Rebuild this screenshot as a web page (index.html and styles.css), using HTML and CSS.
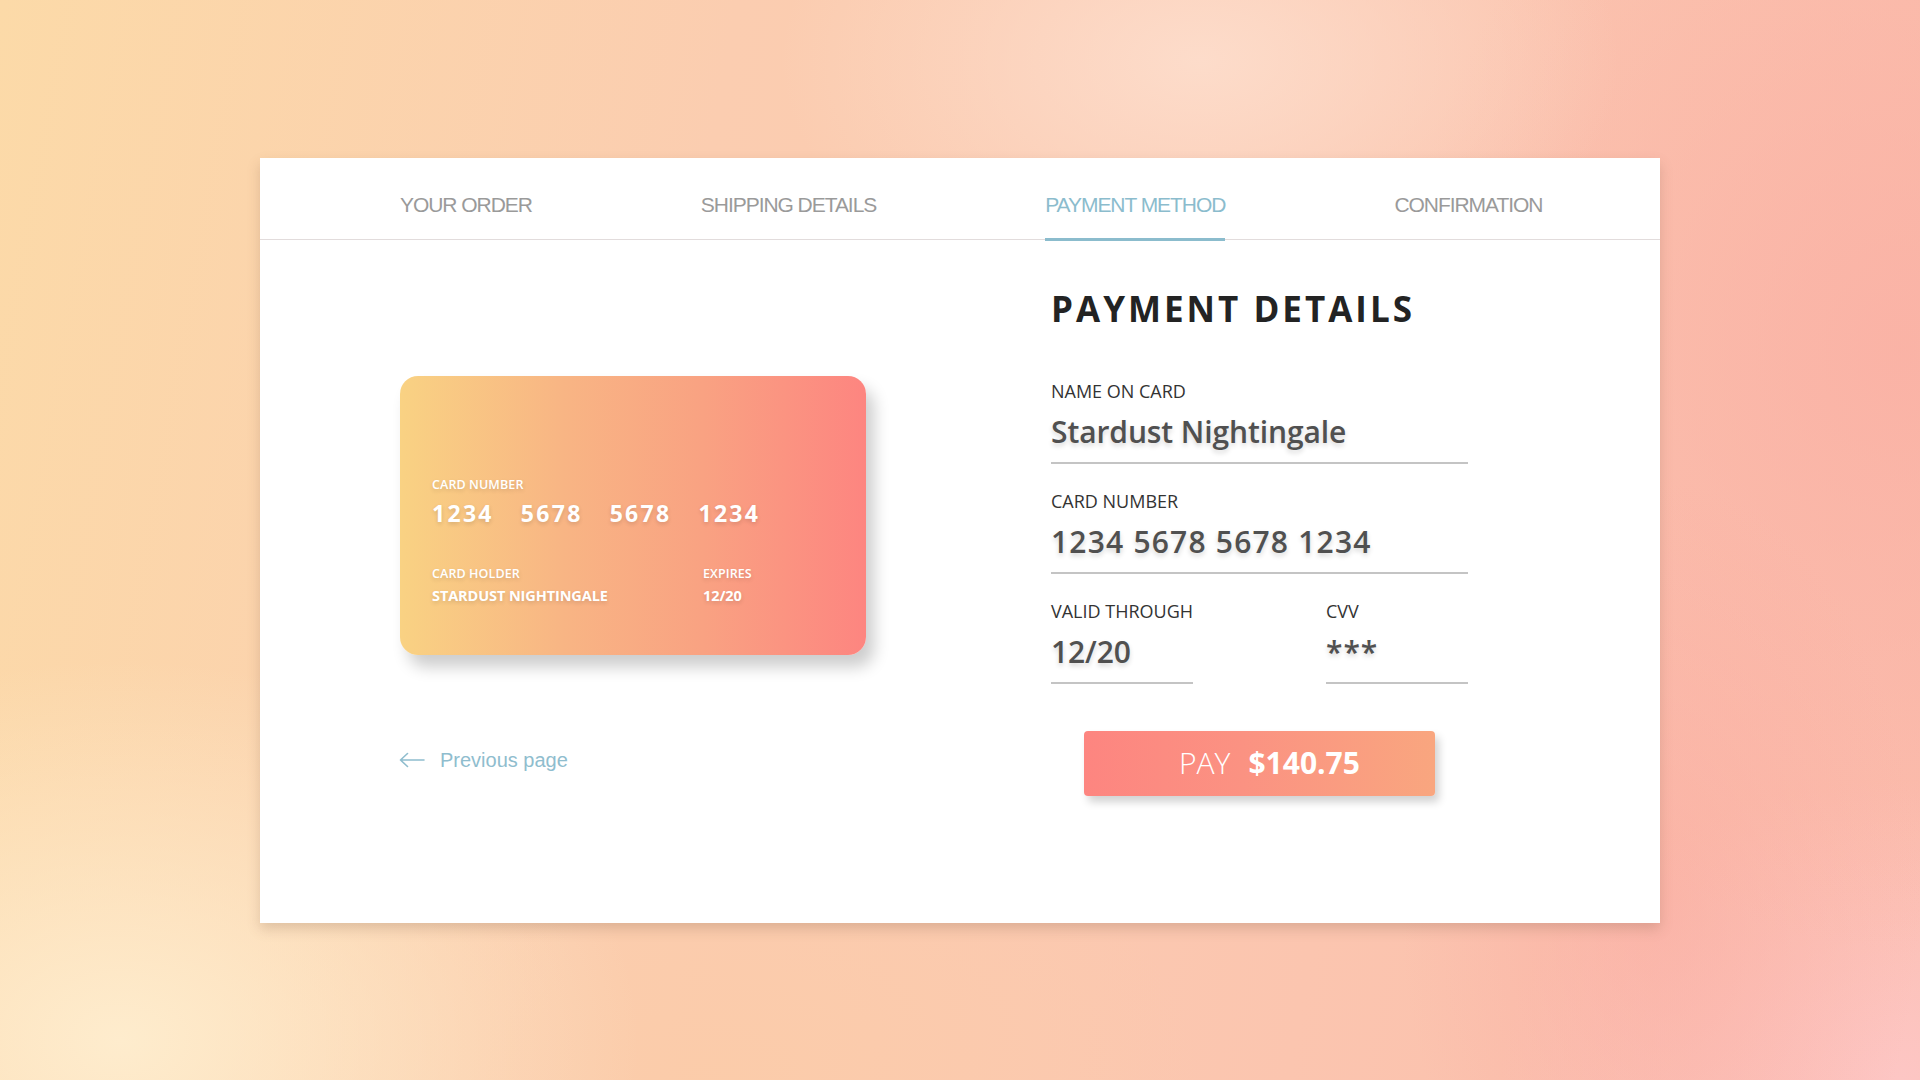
FILE: index.html
```html
<!DOCTYPE html>
<html lang="en">
<head>
<meta charset="utf-8">
<title>Checkout - Payment</title>
<link rel="stylesheet" href="styles.css">
</head>
<body>
<div class="bg">
  <main class="panel">
    <nav class="tabs">
      <div class="tab">YOUR ORDER</div>
      <div class="tab">SHIPPING DETAILS</div>
      <div class="tab active">PAYMENT METHOD</div>
      <div class="tab">CONFIRMATION</div>
    </nav>
    <section class="content">
      <div class="left">
        <div class="card">
          <div class="card-label">CARD NUMBER</div>
          <div class="card-number"><span>1234</span><span>5678</span><span>5678</span><span>1234</span></div>
          <div class="card-bottom">
            <div class="holder">
              <div class="card-label">CARD HOLDER</div>
              <div class="card-value">STARDUST NIGHTINGALE</div>
            </div>
            <div class="expires">
              <div class="card-label">EXPIRES</div>
              <div class="card-value">12/20</div>
            </div>
          </div>
        </div>
        <a class="prev" href="#">
          <svg class="arrow" width="26" height="16" viewBox="0 0 26 16"><path d="M25 8H1.5M8.5 1.5L1.5 8l7 6.5" fill="none" stroke="#8fbdce" stroke-width="1.6" stroke-linecap="round" stroke-linejoin="round"/></svg>
          <span>Previous page</span>
        </a>
      </div>
      <div class="right">
        <h1 class="title">PAYMENT DETAILS</h1>
        <div class="field">
          <div class="label">NAME ON CARD</div>
          <div class="value">Stardust Nightingale</div>
        </div>
        <div class="field">
          <div class="label">CARD NUMBER</div>
          <div class="value digits">1234 5678 5678 1234</div>
        </div>
        <div class="row">
          <div class="field small">
            <div class="label">VALID THROUGH</div>
            <div class="value">12/20</div>
          </div>
          <div class="field small">
            <div class="label">CVV</div>
            <div class="value stars">***</div>
          </div>
        </div>
        <button class="pay"><span class="pay-word">PAY</span><span class="pay-amount">$140.75</span></button>
      </div>
    </section>
  </main>
</div>
</body>
</html>
```
FILE: styles.css
```css
* { box-sizing: border-box; }
html, body { margin: 0; padding: 0; }
body {
  width: 1920px;
  height: 1080px;
  overflow: hidden;
  font-family: "Open Sans", "Liberation Sans", sans-serif;
}
.bg {
  width: 1920px;
  height: 1080px;
  padding-top: 158px;
  display: flex;
  justify-content: center;
  align-items: flex-start;
  background:
    radial-gradient(ellipse 260px 420px at 1660px 900px, rgba(250,170,160,0.55), rgba(250,170,160,0) 100%),
    radial-gradient(ellipse 420px 260px at 1200px 60px, rgba(253,222,205,0.9), rgba(253,222,205,0) 100%),
    radial-gradient(ellipse 520px 380px at 120px 1040px, rgba(254,236,205,1), rgba(254,236,205,0) 100%),
    radial-gradient(ellipse 500px 300px at 700px 1080px, rgba(251,204,168,0.8), rgba(251,204,168,0) 100%),
    radial-gradient(ellipse 500px 600px at 1900px 350px, rgba(250,176,164,0.8), rgba(250,176,164,0) 100%),
    radial-gradient(ellipse 400px 300px at 1900px 1080px, rgba(253,198,196,1), rgba(253,198,196,0) 100%),
    linear-gradient(100deg, #fcdaa8 0%, #fbcdb0 35%, #fbc8b0 60%, #fbbcac 100%);
}
.panel {
  width: 1400px;
  height: 765px;
  background: #fff;
  box-shadow: 0 6px 12px rgba(120, 80, 60, 0.22);
  display: flex;
  flex-direction: column;
}
.tabs {
  height: 82px;
  border-bottom: 1px solid #e2dcdc;
  display: flex;
  gap: 169px;
  padding-left: 140px;
}
.tab {
  font-family: "Liberation Sans", Arial, sans-serif;
  font-size: 21px;
  letter-spacing: -1.05px;
  color: #9a9a9a;
  padding-top: 35px;
  line-height: 24px;
  height: 82px;
  white-space: nowrap;
}
.tab.active {
  color: #8bbccd;
  border-bottom: 3px solid #8bbccd;
  height: 83px;
}
.content {
  flex: 1;
  display: grid;
  grid-template-columns: 791px 1fr;
}
.left {
  padding-left: 140px;
  padding-top: 136px;
  display: flex;
  flex-direction: column;
  align-items: flex-start;
}
.card {
  width: 466px;
  height: 279px;
  border-radius: 18px;
  background: linear-gradient(90deg, #f9d283 0%, #f8b584 35%, #f9a282 65%, #fd8580 100%);
  box-shadow: 8px 12px 16px rgba(0, 0, 0, 0.2);
  padding: 101px 0 0 32px;
  color: #fff;
  text-shadow: 0 2px 4px rgba(0, 0, 0, 0.14);
}
.card-label {
  font-size: 12.5px;
  font-weight: 600;
  line-height: 16px;
  letter-spacing: 0.1px;
}
.card-number {
  display: flex;
  gap: 27px;
  font-size: 23px;
  font-weight: 700;
  line-height: 30px;
  letter-spacing: 2.3px;
  margin-top: 5px;
}
.card-bottom {
  display: flex;
  margin-top: 38px;
}
.holder { width: 271px; }
.card-value {
  font-size: 14.5px;
  font-weight: 700;
  line-height: 20px;
  margin-top: 4px;
  letter-spacing: -0.1px;
}
.prev {
  margin-top: 93px;
  display: flex;
  align-items: center;
  gap: 15px;
  text-decoration: none;
  color: #8fbdce;
  font-family: "Liberation Sans", Arial, sans-serif;
  font-size: 20px;
  line-height: 24px;
  margin-left: -1px;
}
.arrow { display: block; }
.right {
  padding-top: 48px;
  width: 417px;
}
.title {
  margin: 0;
  font-size: 35px;
  font-weight: 700;
  line-height: 42px;
  letter-spacing: 3px;
  color: #232323;
  margin-bottom: 49px;
  white-space: nowrap;
}
.field {
  border-bottom: 2px solid #c4c4c4;
  padding-bottom: 10px;
  margin-bottom: 25px;
}
.label {
  font-size: 18px;
  line-height: 24px;
  color: #333;
  margin-bottom: 9px;
  white-space: nowrap;
}
.value {
  font-size: 30px;
  line-height: 40px;
  font-weight: 600;
  color: #505050;
  letter-spacing: -0.1px;
  text-shadow: 0 3px 5px rgba(0, 0, 0, 0.16);
  white-space: nowrap;
}
.value.digits { letter-spacing: 1.2px; }
.row {
  display: flex;
  justify-content: space-between;
}
.field.small { width: 142px; }
.stars { letter-spacing: 1px; }
.pay {
  display: flex;
  justify-content: center;
  align-items: center;
  gap: 18px;
  width: 351px;
  height: 65px;
  margin: 22px 0 0 33px;
  border: none;
  border-radius: 4px;
  background: linear-gradient(90deg, #fd8580 0%, #fb9282 45%, #f9a67f 100%);
  box-shadow: 4px 6px 8px rgba(0, 0, 0, 0.18);
  color: #fff;
  font-family: "Open Sans", sans-serif;
  font-size: 30px;
  padding: 0 0 2px 20px;
}
.pay-word { font-weight: 300; }
.pay-amount { font-weight: 700; }
```
